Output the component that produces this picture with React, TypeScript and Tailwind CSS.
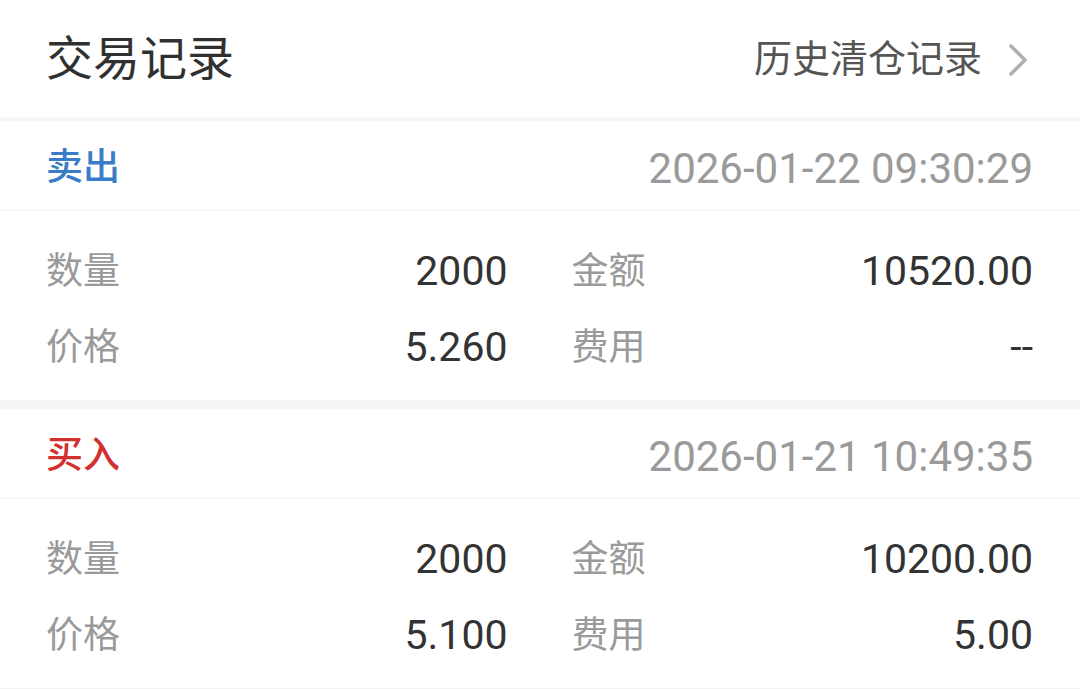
import React from "react";

type Trade = {
  side: "卖出" | "买入";
  time: string;
  qty: string;
  amount: string;
  price: string;
  fee: string;
};

const trades: Trade[] = [
  { side: "卖出", time: "2026-01-22 09:30:29", qty: "2000", amount: "10520.00", price: "5.260", fee: "--" },
  { side: "买入", time: "2026-01-21 10:49:35", qty: "2000", amount: "10200.00", price: "5.100", fee: "5.00" },
];

const font = "font-['Roboto','Noto_Sans_CJK_SC',sans-serif]";

function Cell({ label, value }: { label: string; value: string }) {
  return (
    <div className="flex h-[76px] items-center justify-between">
      <span className="text-[37px] text-[#9a9a9a]">{label}</span>
      <span className="text-[41px] text-[#333]">{value}</span>
    </div>
  );
}

function TradeCard({ trade }: { trade: Trade }) {
  const sell = trade.side === "卖出";
  return (
    <div className="bg-white">
      <div className="flex h-[90px] items-center justify-between border-b border-[#f2f3f5] pl-[46px] pr-[47px] pt-[5px]">
        <span className={`text-[37px] font-medium ${sell ? "text-[#3a7cc7]" : "text-[#d32f2f]"}`}>
          {trade.side}
        </span>
        <span className="text-[42px] text-[#9a9a9a]">{trade.time}</span>
      </div>
      <div className="grid grid-cols-2 gap-x-[64px] pl-[46px] pr-[47px] pt-[23px] pb-[14px] border-b border-[#f2f3f5]">
        <Cell label="数量" value={trade.qty} />
        <Cell label="金额" value={trade.amount} />
        <Cell label="价格" value={trade.price} />
        <Cell label="费用" value={trade.fee} />
      </div>
    </div>
  );
}

export default function App() {
  return (
    <div className={`min-h-screen w-[1080px] bg-white ${font}`}>
      <div className="flex h-[117px] items-center justify-between pl-[46px] pr-[52px] pt-[2px]">
        <h1 className="text-[47px] font-normal text-[#303030]">交易记录</h1>
        <div className="flex items-center gap-[26px]">
          <span className="text-[38px] text-[#555]">历史清仓记录</span>
          <svg width="20" height="34" viewBox="0 0 20 34" fill="none">
            <path d="M3 3l14 14L3 31" stroke="#b0b0b0" strokeWidth="3.5" strokeLinecap="round" strokeLinejoin="round" />
          </svg>
        </div>
      </div>
      <div className="h-[4px] bg-[#f5f6f8]" />
      <TradeCard trade={trades[0]} />
      <div className="h-[8px] bg-[#f5f6f8]" />
      <TradeCard trade={trades[1]} />
    </div>
  );
}
